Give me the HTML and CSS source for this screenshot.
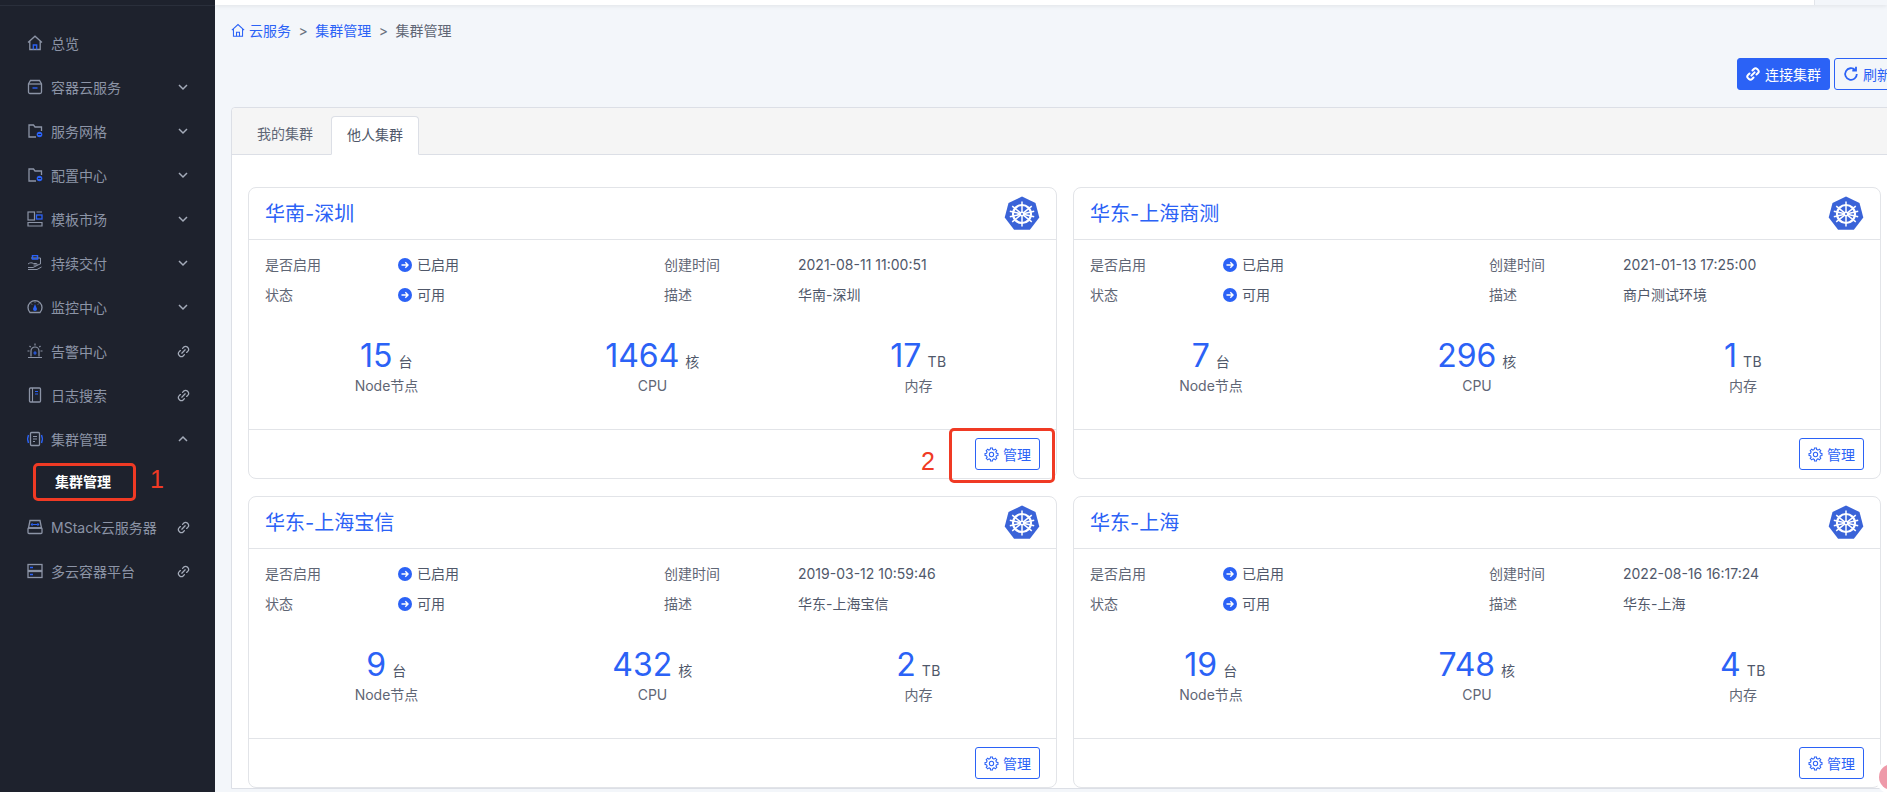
FILE: index.html
```html
<!DOCTYPE html>
<html lang="zh-CN">
<head>
<meta charset="utf-8">
<title>集群管理</title>
<link rel="stylesheet" href="styles.css">
</head>
<body>
<svg class="defs" width="0" height="0" aria-hidden="true">
  <defs>
    <symbol id="chev-d" viewBox="0 0 12 12"><path d="M2 4l4 4 4-4" fill="none" stroke="currentColor" stroke-width="1.5"/></symbol>
    <symbol id="chev-u" viewBox="0 0 12 12"><path d="M2 8l4-4 4 4" fill="none" stroke="currentColor" stroke-width="1.5"/></symbol>
    <symbol id="link" viewBox="0 0 14 14"><g fill="none" stroke="currentColor" stroke-width="1.4" stroke-linecap="round"><path d="M6 3.6l1.4-1.4a2.6 2.6 0 0 1 3.7 0l.7.7a2.6 2.6 0 0 1 0 3.7L10.4 8"/><path d="M8 10.4l-1.4 1.4a2.6 2.6 0 0 1-3.7 0l-.7-.7a2.6 2.6 0 0 1 0-3.7L3.6 6"/><path d="M5.2 8.8l3.6-3.6"/></g></symbol>
    <symbol id="link-bold" viewBox="0 0 14 14"><g fill="none" stroke="currentColor" stroke-width="2" stroke-linecap="round"><path d="M6.500 3.500l1.400-1.500a2.300 2.300 0 0 1 3.200 0l.9.9a2.300 2.300 0 0 1 0 3.200L10.500 7.500"/><path d="M7.500 10.500l-1.400 1.500a2.300 2.300 0 0 1-3.200 0l-.9-.9a2.300 2.300 0 0 1 0-3.200L3.500 6.500"/><path d="M5.400 8.600l3.200-3.200"/></g></symbol>
    <symbol id="gear" viewBox="0 0 16 16">
      <g fill="none" stroke="currentColor" stroke-width="1.100">
        <path id="tooth" d="M6.790 2.740L6.900 1.100h2.200l.11 1.640A5.400 5.400 0 0 1 10.860 3.420"/>
        <use href="#tooth" transform="rotate(45 8 8)"/>
        <use href="#tooth" transform="rotate(90 8 8)"/>
        <use href="#tooth" transform="rotate(135 8 8)"/>
        <use href="#tooth" transform="rotate(180 8 8)"/>
        <use href="#tooth" transform="rotate(225 8 8)"/>
        <use href="#tooth" transform="rotate(270 8 8)"/>
        <use href="#tooth" transform="rotate(315 8 8)"/>
        <circle cx="8" cy="8" r="2.300"/>
      </g>
    </symbol>
    <symbol id="go" viewBox="0 0 14 14"><circle cx="7" cy="7" r="7" fill="#2b62f6"/><path d="M3.500 7h6.500M7.300 4.300L10 7l-2.700 2.700" fill="none" stroke="#fff" stroke-width="1.400"/></symbol>
    <symbol id="k8s" viewBox="0 0 36 36">
      <path d="M18 0.500l13.500 6.500 3.800 14.600-9.400 12.100H10.100L0.700 21.600 4.500 7z" fill="#3a63d8"/>
      <g fill="none" stroke="#fff">
        <circle cx="18" cy="18" r="9" stroke-width="2.200"/>
        <g stroke-width="1.500">
          <path d="M18 5.500V30.500"/>
          <path d="M8.200 10.200L27.800 25.800"/>
          <path d="M27.800 10.200L8.200 25.800"/>
          <path d="M5.800 20.800L30.200 15.200"/>
          <path d="M30.200 20.800L5.800 15.200"/>
        </g>
      </g>
      <circle cx="18" cy="18" r="2.500" fill="#fff"/>
      <circle cx="18" cy="18" r="1" fill="#3a63d8"/>
    </symbol>
    <symbol id="home" viewBox="0 0 16 16"><g fill="none" stroke="currentColor" stroke-width="1.200"><path d="M1 7.500L8 1.200l7 6.300M2.800 6.200V14.500h10.400V6.200"/><path d="M6.300 14.500V10h3.400v4.500"/></g></symbol>
    <symbol id="i-home" viewBox="0 0 16 16"><path d="M1 7.500L8 1.200l7 6.300M2.800 6.200V14.500h10.400V6.200" fill="none" stroke="currentColor" stroke-width="1.300"/><path d="M6.300 14.500V10h3.400v4.500" fill="none" stroke="#2b62f6" stroke-width="1.300"/></symbol>
    <symbol id="i-box" viewBox="0 0 16 16"><path d="M3.500 1.500h9L14.500 5v8a1.500 1.500 0 0 1-1.500 1.500H3A1.500 1.500 0 0 1 1.500 13V5z" fill="none" stroke="currentColor" stroke-width="1.300"/><path d="M1.500 5h13" stroke="currentColor" stroke-width="1.300"/><path d="M5.500 9h5" stroke="#2b62f6" stroke-width="1.400"/></symbol>
    <symbol id="i-folder" viewBox="0 0 16 16"><path d="M9 14H2V2h4.500l1.500 2h6.500v4" fill="none" stroke="currentColor" stroke-width="1.300"/><circle cx="12.500" cy="11.500" r="2.800" fill="#2b62f6"/><path d="M11 11.500h3" stroke="#1e222d" stroke-width=".9"/></symbol>
    <symbol id="i-tpl" viewBox="0 0 16 16"><g fill="none" stroke="currentColor" stroke-width="1.200"><rect x="1" y="1" width="6.500" height="8"/><path d="M9.500 1h5.500M1 11.500h14v3.500H1z"/></g><rect x="9.500" y="4" width="5.500" height="4" fill="none" stroke="#2b62f6" stroke-width="1.300"/></symbol>
    <symbol id="i-hand" viewBox="0 0 16 16"><path d="M1 9c2-1.500 3.500-1.500 5.500-.5h3c1 0 1 1.500 0 1.500H6.500M4 3h9.500v6M1 12.500h5l8-4M1 14.500h9l4.500-2.500" fill="none" stroke="currentColor" stroke-width="1"/><path d="M5.500.5h5v3.500h-5z" fill="none" stroke="#2b62f6" stroke-width="1.500"/></symbol>
    <symbol id="i-gauge" viewBox="0 0 16 16"><path d="M3 13.500a7 7 0 1 1 10 0z" fill="none" stroke="currentColor" stroke-width="1.300"/><path d="M4 4.500l1 1M12 4.500l-1 1M8 2.500v1.200" stroke="currentColor" stroke-width="1"/><path d="M8 5l2 5a2 2 0 1 1-4 0z" fill="#2b62f6"/></symbol>
    <symbol id="i-alarm" viewBox="0 0 16 16"><g fill="none" stroke="currentColor" stroke-width="1.200"><path d="M4 13.500V8a4 4 0 0 1 8 0v5.500M1 14.500h14M8 .5v2M2.500 3l1.200 1.200M13.500 3l-1.200 1.200M.5 8h2M13.500 8h2"/></g><path d="M6.300 10h3.400M8 8.300v3.400" stroke="#2b62f6" stroke-width="1.200"/></symbol>
    <symbol id="i-book" viewBox="0 0 16 16"><rect x="2.500" y="1" width="11" height="14" rx="1" fill="none" stroke="currentColor" stroke-width="1.300"/><path d="M5.500 1v14" stroke="currentColor" stroke-width="1.100"/><path d="M8 4.500h3M8 7h3" stroke="#2b62f6" stroke-width="1.200"/></symbol>
    <symbol id="i-cluster" viewBox="0 0 16 16"><rect x="3.500" y="1.500" width="9" height="13" rx="1" fill="none" stroke="currentColor" stroke-width="1.300"/><path d="M6 5.500h4M6 8h4M6 10.500h2" stroke="currentColor" stroke-width="1"/><path d="M1.500 4l-1 4 1 4M14.500 4l1 4-1 4" fill="none" stroke="#2b62f6" stroke-width="1.400"/></symbol>
    <symbol id="i-server" viewBox="0 0 16 16"><g fill="none" stroke="currentColor" stroke-width="1.300"><path d="M3 1.500h10L14.500 9h-13z"/><rect x="1" y="9" width="14" height="5.500" rx="1"/></g><path d="M5.500 5.500h5M5.500 4.300L4.300 5.500l1.200 1.200M10.500 4.300l1.200 1.200-1.200 1.200" fill="none" stroke="#2b62f6" stroke-width="1.100"/></symbol>
    <symbol id="i-multi" viewBox="0 0 16 16"><g fill="none" stroke="currentColor" stroke-width="1.300"><rect x="1" y="1.500" width="14" height="6"/><rect x="1" y="8.500" width="14" height="6"/></g><path d="M3 4.500h3M3 11.500h3" stroke="#2b62f6" stroke-width="1.400"/></symbol>
  </defs>
</svg>

<div class="app">
  <aside class="sidebar">
    <nav class="menu">
      <a class="item"><svg class="ic"><use href="#i-home"/></svg><span class="label">总览</span></a>
      <a class="item"><svg class="ic"><use href="#i-box"/></svg><span class="label">容器云服务</span><svg class="tail"><use href="#chev-d"/></svg></a>
      <a class="item"><svg class="ic"><use href="#i-folder"/></svg><span class="label">服务网格</span><svg class="tail"><use href="#chev-d"/></svg></a>
      <a class="item"><svg class="ic"><use href="#i-folder"/></svg><span class="label">配置中心</span><svg class="tail"><use href="#chev-d"/></svg></a>
      <a class="item"><svg class="ic"><use href="#i-tpl"/></svg><span class="label">模板市场</span><svg class="tail"><use href="#chev-d"/></svg></a>
      <a class="item"><svg class="ic"><use href="#i-hand"/></svg><span class="label">持续交付</span><svg class="tail"><use href="#chev-d"/></svg></a>
      <a class="item"><svg class="ic"><use href="#i-gauge"/></svg><span class="label">监控中心</span><svg class="tail"><use href="#chev-d"/></svg></a>
      <a class="item"><svg class="ic"><use href="#i-alarm"/></svg><span class="label">告警中心</span><svg class="tail tail-link"><use href="#link"/></svg></a>
      <a class="item"><svg class="ic"><use href="#i-book"/></svg><span class="label">日志搜索</span><svg class="tail tail-link"><use href="#link"/></svg></a>
      <a class="item"><svg class="ic"><use href="#i-cluster"/></svg><span class="label">集群管理</span><svg class="tail"><use href="#chev-u"/></svg></a>
      <a class="item sub"><span class="label">集群管理</span></a>
      <a class="item"><svg class="ic"><use href="#i-server"/></svg><span class="label">MStack云服务器</span><svg class="tail tail-link"><use href="#link"/></svg></a>
      <a class="item"><svg class="ic"><use href="#i-multi"/></svg><span class="label">多云容器平台</span><svg class="tail tail-link"><use href="#link"/></svg></a>
    </nav>
  </aside>

  <main class="main">
    <div class="topbar"><div class="topbar-white"></div><div class="topbar-rest"></div></div>
    <div class="crumbs">
      <svg class="crumb-home"><use href="#home"/></svg>
      <a class="crumb-link">云服务</a><span class="crumb-sep">&gt;</span>
      <a class="crumb-link">集群管理</a><span class="crumb-sep">&gt;</span>
      <span class="crumb-cur">集群管理</span>
    </div>
    <div class="actions">
      <button class="btn btn-primary"><svg class="btn-ic"><use href="#link-bold"/></svg>连接集群</button>
      <button class="btn btn-outline"><svg class="btn-ic2" viewBox="0 0 16 16"><path d="M13.800 8a5.800 5.800 0 1 1-1.700-4.100M13 .8v3.700H9.300" fill="none" stroke="currentColor" stroke-width="1.800"/></svg>刷新</button>
    </div>

    <section class="panel">
      <div class="tabs">
        <div class="tab">我的集群</div>
        <div class="tab tab-active">他人集群</div>
      </div>
      <div class="cards">
        <article class="card">
          <header class="card-head"><h2 class="card-title">华南-深圳</h2><svg class="k8s"><use href="#k8s"/></svg></header>
          <div class="card-body">
            <dl class="info">
              <dt>是否启用</dt><dd><svg class="go"><use href="#go"/></svg>已启用</dd><dt>创建时间</dt><dd>2021-08-11 11:00:51</dd>
              <dt>状态</dt><dd><svg class="go"><use href="#go"/></svg>可用</dd><dt>描述</dt><dd>华南-深圳</dd>
            </dl>
            <div class="stats">
              <div class="stat"><div class="stat-line"><b>15</b><i>台</i></div><div class="stat-name">Node节点</div></div>
              <div class="stat"><div class="stat-line"><b>1464</b><i>核</i></div><div class="stat-name">CPU</div></div>
              <div class="stat"><div class="stat-line"><b>17</b><i>TB</i></div><div class="stat-name">内存</div></div>
            </div>
          </div>
          <footer class="card-foot"><button class="btn btn-outline btn-manage"><svg class="gear"><use href="#gear"/></svg>管理</button></footer>
        </article>

        <article class="card">
          <header class="card-head"><h2 class="card-title">华东-上海商测</h2><svg class="k8s"><use href="#k8s"/></svg></header>
          <div class="card-body">
            <dl class="info">
              <dt>是否启用</dt><dd><svg class="go"><use href="#go"/></svg>已启用</dd><dt>创建时间</dt><dd>2021-01-13 17:25:00</dd>
              <dt>状态</dt><dd><svg class="go"><use href="#go"/></svg>可用</dd><dt>描述</dt><dd>商户测试环境</dd>
            </dl>
            <div class="stats">
              <div class="stat"><div class="stat-line"><b>7</b><i>台</i></div><div class="stat-name">Node节点</div></div>
              <div class="stat"><div class="stat-line"><b>296</b><i>核</i></div><div class="stat-name">CPU</div></div>
              <div class="stat"><div class="stat-line"><b>1</b><i>TB</i></div><div class="stat-name">内存</div></div>
            </div>
          </div>
          <footer class="card-foot"><button class="btn btn-outline btn-manage"><svg class="gear"><use href="#gear"/></svg>管理</button></footer>
        </article>

        <article class="card">
          <header class="card-head"><h2 class="card-title">华东-上海宝信</h2><svg class="k8s"><use href="#k8s"/></svg></header>
          <div class="card-body">
            <dl class="info">
              <dt>是否启用</dt><dd><svg class="go"><use href="#go"/></svg>已启用</dd><dt>创建时间</dt><dd>2019-03-12 10:59:46</dd>
              <dt>状态</dt><dd><svg class="go"><use href="#go"/></svg>可用</dd><dt>描述</dt><dd>华东-上海宝信</dd>
            </dl>
            <div class="stats">
              <div class="stat"><div class="stat-line"><b>9</b><i>台</i></div><div class="stat-name">Node节点</div></div>
              <div class="stat"><div class="stat-line"><b>432</b><i>核</i></div><div class="stat-name">CPU</div></div>
              <div class="stat"><div class="stat-line"><b>2</b><i>TB</i></div><div class="stat-name">内存</div></div>
            </div>
          </div>
          <footer class="card-foot"><button class="btn btn-outline btn-manage"><svg class="gear"><use href="#gear"/></svg>管理</button></footer>
        </article>

        <article class="card">
          <header class="card-head"><h2 class="card-title">华东-上海</h2><svg class="k8s"><use href="#k8s"/></svg></header>
          <div class="card-body">
            <dl class="info">
              <dt>是否启用</dt><dd><svg class="go"><use href="#go"/></svg>已启用</dd><dt>创建时间</dt><dd>2022-08-16 16:17:24</dd>
              <dt>状态</dt><dd><svg class="go"><use href="#go"/></svg>可用</dd><dt>描述</dt><dd>华东-上海</dd>
            </dl>
            <div class="stats">
              <div class="stat"><div class="stat-line"><b>19</b><i>台</i></div><div class="stat-name">Node节点</div></div>
              <div class="stat"><div class="stat-line"><b>748</b><i>核</i></div><div class="stat-name">CPU</div></div>
              <div class="stat"><div class="stat-line"><b>4</b><i>TB</i></div><div class="stat-name">内存</div></div>
            </div>
          </div>
          <footer class="card-foot"><button class="btn btn-outline btn-manage"><svg class="gear"><use href="#gear"/></svg>管理</button></footer>
        </article>
      </div>
    </section>
  </main>
</div>

<div class="mark mark-1"></div>
<div class="mark mark-2"></div>
<span class="mark-num num-1">1</span>
<span class="mark-num num-2">2</span>
<div class="float-bubble"></div>
</body>
</html>
```

FILE: styles.css
```css
* { box-sizing: border-box; }
html, body { margin: 0; height: 100%; overflow: hidden; }
body {
  position: relative;
  font-family: Inter, "Noto Sans CJK SC", sans-serif;
  font-size: 14px;
  color: #50586a;
  background: #f3f6fa;
}
.defs { position: absolute; }
.app { display: flex; height: 792px; width: 1887px; overflow: hidden; }

/* sidebar */
.sidebar {
  flex: 0 0 215px;
  background: #1e222d;
  color: #8c94a6;
  box-shadow: inset 0 5px 0 #1e222d, inset 0 6px 0 #2a2f3b;
}
.menu { display: flex; flex-direction: column; padding-top: 21px; }
.item {
  display: flex;
  align-items: center;
  height: 44px;
  padding-left: 27px;
  position: relative;
}
.ic { width: 16px; height: 16px; margin-right: 8px; flex: none; color: #8c94a6; }
.label { flex: 1; white-space: nowrap; }
.tail { width: 12px; height: 12px; margin-right: 26px; flex: none; color: #a4abb9; }
.tail-link { width: 13px; height: 13px; margin-right: 25px; }
.sub { padding-left: 55px; padding-bottom: 5px; color: #fff; font-weight: 700; }

/* main */
.main { flex: 1; min-width: 0; display: flex; flex-direction: column; }
.topbar { display: flex; height: 5px; flex: none; box-shadow: 0 1px 4px rgba(0, 0, 0, .08); }
.topbar-white { flex: 0 0 1599px; background: #fff; }
.topbar-rest { flex: 1; background: #f3f6fa; border-left: 1px solid #e2e5ea; }
.crumbs { display: flex; align-items: center; height: 20px; margin: 15px 0 0 16px; flex: none; }
.crumb-home { width: 14px; height: 15px; margin-right: 4px; color: #2b62f6; }
.crumb-link { color: #2b62f6; }
.crumb-sep { margin: 0 7.5px; color: #6b7280; }
.crumb-cur { color: #5f6675; }

.actions { display: flex; gap: 4px; margin: 18px 0 0 1522px; flex: none; width: 400px; }
.btn {
  display: inline-flex;
  align-items: center;
  justify-content: center;
  height: 32px;
  border-radius: 3px;
  border: 1px solid #2b62f6;
  font: inherit;
  padding: 0;
  white-space: nowrap;
}
.btn-primary { width: 93px; background: #2b62f6; color: #fff; }
.btn-outline { background: transparent; color: #2b62f6; }
.actions .btn-outline { width: 66px; }
.btn-ic { width: 14px; height: 14px; margin-right: 5px; }
.btn-ic2 { width: 16px; height: 16px; margin-right: 4px; }

/* panel */
.panel {
  margin: 17px 0 0 16px;
  width: 1680px;
  background: #fff;
  border: 1px solid #dcdfe6;
  border-radius: 4px 4px 0 0;
  flex: none;
}
.tabs {
  display: flex;
  align-items: flex-end;
  height: 47px;
  padding-left: 9px;
  background: #f5f5f5;
  border-bottom: 1px solid #dcdfe6;
  border-radius: 4px 4px 0 0;
}
.tab { height: 39px; width: 90px; padding-left: 16px; line-height: 36px; color: #5f6675; margin-bottom: -1px; }
.tab-active {
  width: 88px;
  background: #fff;
  color: #50586a;
  border: 1px solid #dcdfe6;
  border-bottom-color: #fff;
  border-radius: 4px 4px 0 0;
  padding-left: 15px;
}
.cards {
  display: grid;
  grid-template-columns: 809px 808px;
  gap: 17px 16px;
  padding: 32px 0 0 16px;
}
.card {
  height: 292px;
  background: #fff;
  border: 1px solid #e2e4e8;
  border-radius: 8px;
  display: flex;
  flex-direction: column;
}
.card-head {
  display: flex;
  align-items: center;
  justify-content: space-between;
  height: 52px;
  padding: 0 16px 0 16px;
  border-bottom: 1px solid #e2e4e8;
  flex: none;
}
.card-title { margin: 0; font-size: 20px; line-height: 28px; font-weight: 400; color: #2b62f6; }
.k8s { width: 36px; height: 36px; }
.card-body { flex: 1; padding: 10px 16px 0; }
.info {
  display: grid;
  grid-template-columns: 133px 266px 134px 1fr;
  grid-auto-rows: 30px;
  align-items: center;
  margin: 0;
}
.info dt { color: #5f6675; line-height: 20px; }
.info dd { margin: 0; display: flex; align-items: center; line-height: 20px; color: #50586a; }
.go { width: 14px; height: 14px; margin-right: 5px; }
.stats {
  display: grid;
  grid-template-columns: repeat(3, 266px);
  justify-content: center;
  margin: 27px -15px 0 -15px;
}
.stat { text-align: center; }
.stat-line { height: 38px; line-height: 38px; }
.stat-line b { font-size: 32px; font-weight: 400; color: #2b62f6; }
.stat-line i { font-style: normal; font-size: 14px; letter-spacing: .5px; margin-left: 6px; color: #50586a; }
.stat-name { margin-top: 1px; line-height: 20px; color: #5f6675; }
.card-foot {
  height: 49px;
  flex: none;
  border-top: 1px solid #e2e4e8;
  display: flex;
  align-items: center;
  justify-content: flex-end;
  padding-right: 16px;
}
.btn-manage { width: 65px; }
.gear { width: 15px; height: 15px; margin-right: 4px; }

/* annotation overlays */
.mark { position: absolute; border: 3px solid #f03a24; border-radius: 5px; }
.mark-1 { left: 33px; top: 463px; width: 103px; height: 38px; }
.mark-2 { left: 949px; top: 428px; width: 106px; height: 55px; }
.mark-num { position: absolute; font-family: "Liberation Sans", sans-serif; font-size: 25px; line-height: 28px; color: #f03a24; }
.num-1 { left: 150px; top: 465px; }
.num-2 { left: 921px; top: 447px; }
.float-bubble {
  position: absolute;
  left: 1879px;
  top: 764px;
  width: 26px;
  height: 26px;
  border-radius: 50%;
  background: #ee9aa9;
  box-shadow: 0 0 0 4px #fff;
}
```
